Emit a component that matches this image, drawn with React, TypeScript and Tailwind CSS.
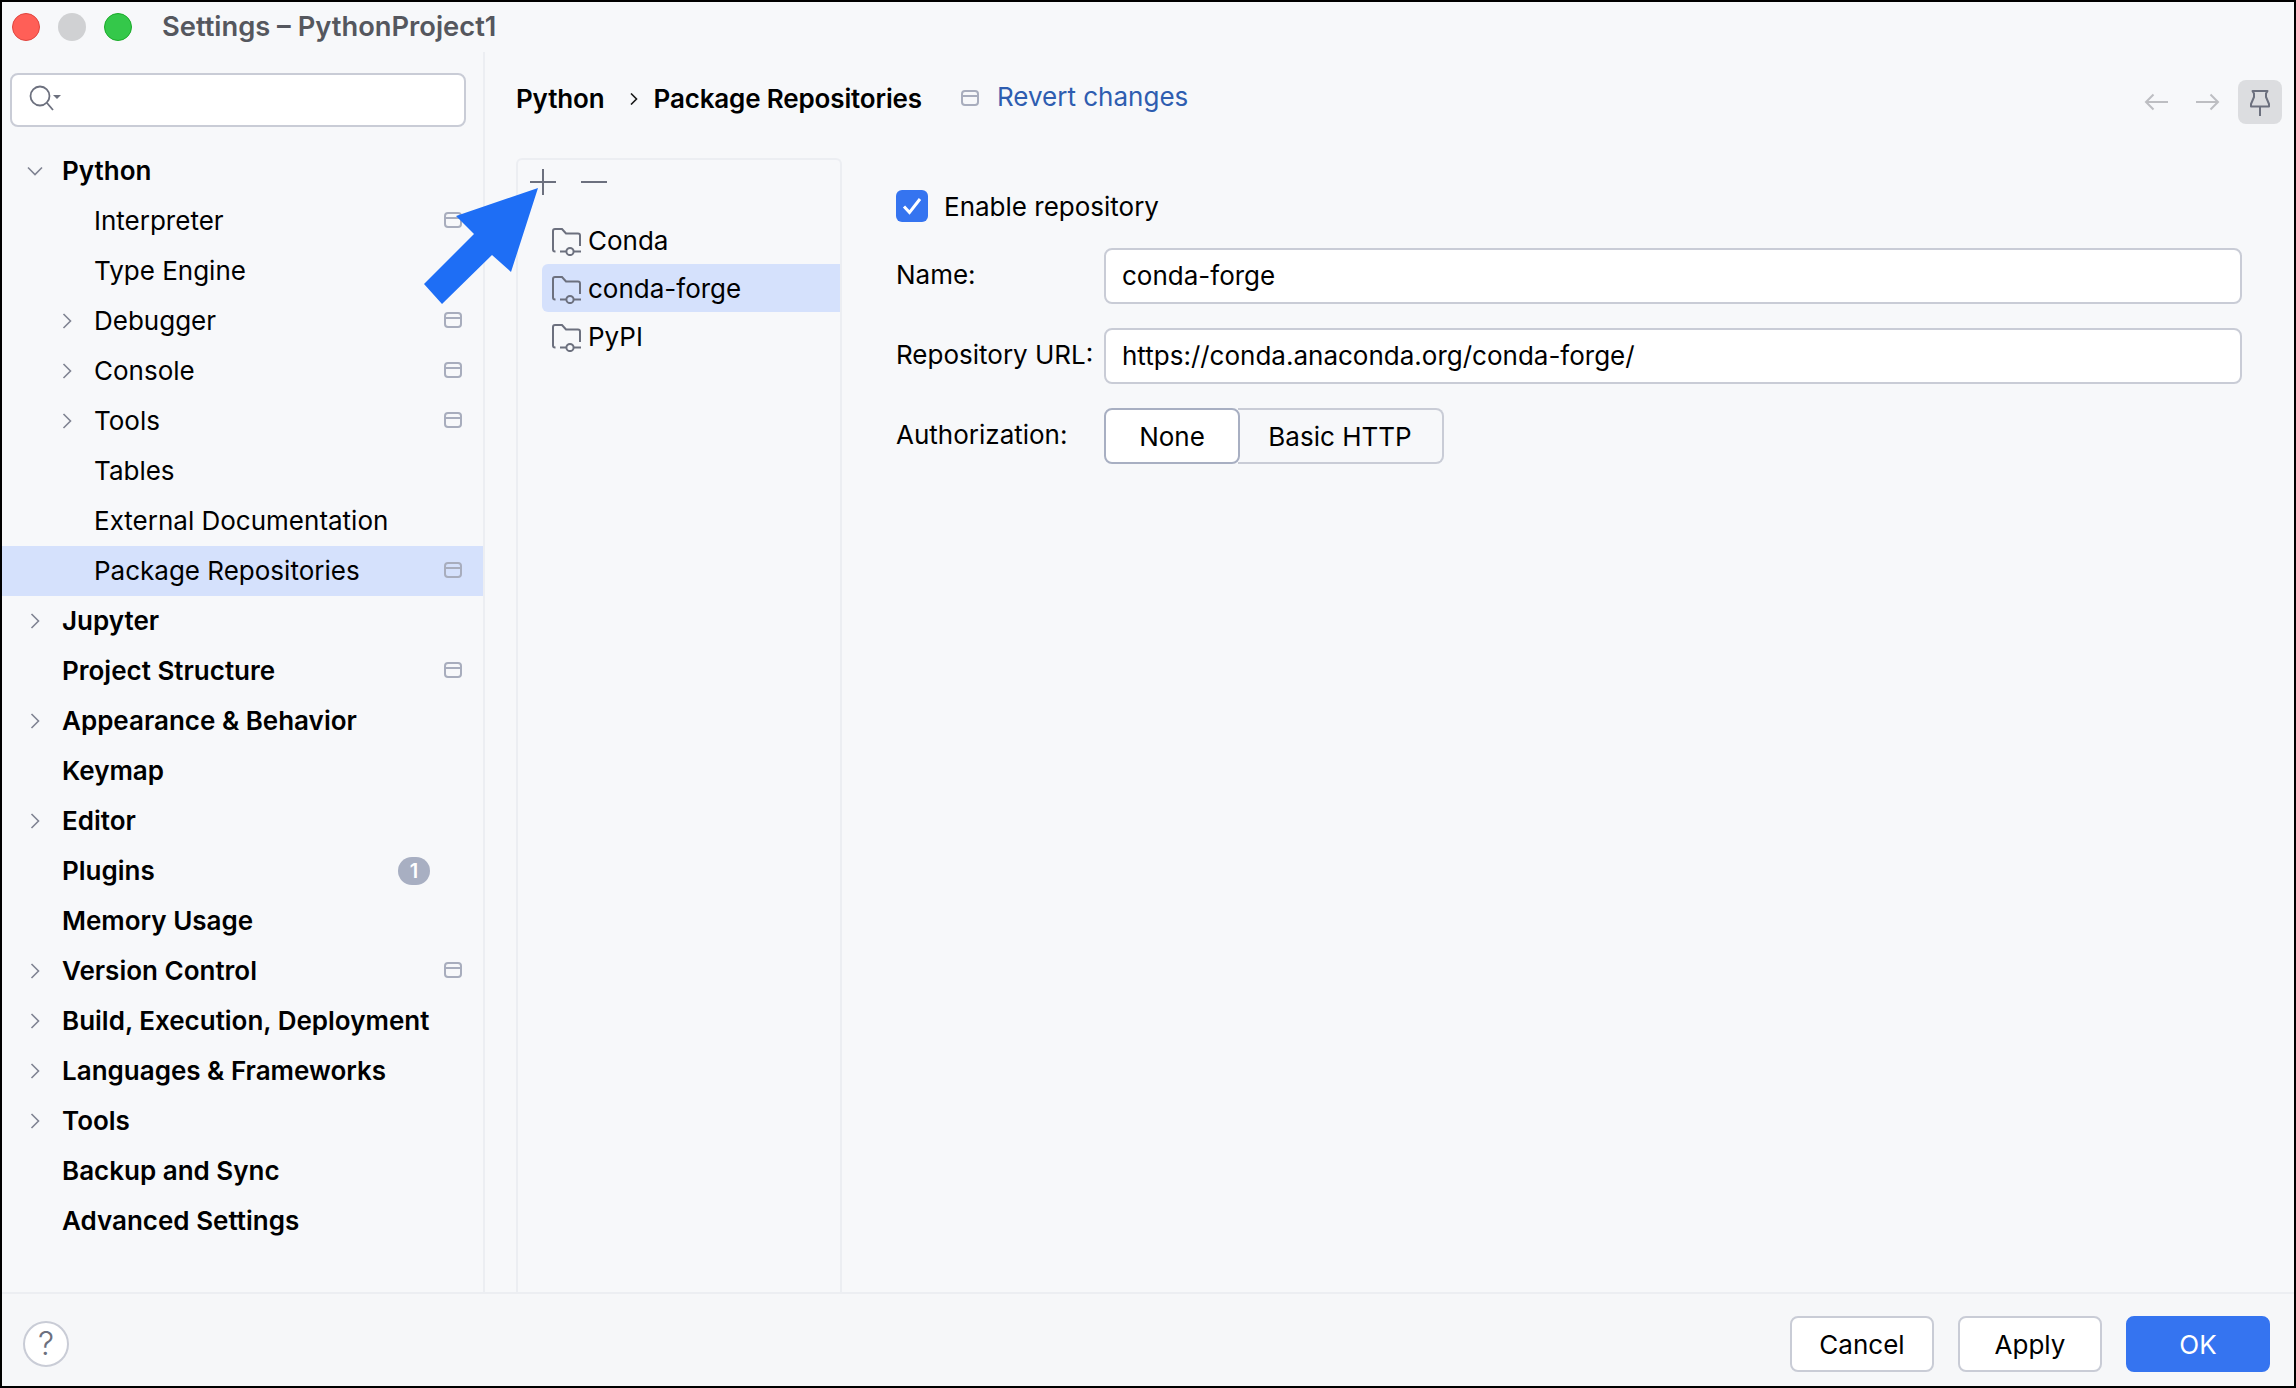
import { Fragment } from "react";

type Row = { label: string; level?: 0 | 1; caret?: "right" | "down"; mod?: boolean; badge?: string; selected?: boolean };

const rows: Row[] = [
  { label: "Python", caret: "down" },
  { label: "Interpreter", level: 1, mod: true },
  { label: "Type Engine", level: 1 },
  { label: "Debugger", level: 1, caret: "right", mod: true },
  { label: "Console", level: 1, caret: "right", mod: true },
  { label: "Tools", level: 1, caret: "right", mod: true },
  { label: "Tables", level: 1 },
  { label: "External Documentation", level: 1 },
  { label: "Package Repositories", level: 1, mod: true, selected: true },
  { label: "Jupyter", caret: "right" },
  { label: "Project Structure", mod: true },
  { label: "Appearance & Behavior", caret: "right" },
  { label: "Keymap" },
  { label: "Editor", caret: "right" },
  { label: "Plugins", badge: "1" },
  { label: "Memory Usage" },
  { label: "Version Control", caret: "right", mod: true },
  { label: "Build, Execution, Deployment", caret: "right" },
  { label: "Languages & Frameworks", caret: "right" },
  { label: "Tools", caret: "right" },
  { label: "Backup and Sync" },
  { label: "Advanced Settings" },
];

function ModIcon({ className = "" }: { className?: string }) {
  return (
    <svg width="18" height="16" viewBox="0 0 18 16" fill="none" className={className}>
      <rect x="1" y="1" width="16" height="14" rx="3" stroke="#a8adbd" strokeWidth="2" />
      <path d="M1 6h16" stroke="#a8adbd" strokeWidth="2" />
    </svg>
  );
}

function Caret({ dir }: { dir: "right" | "down" }) {
  if (dir === "down") {
    return (
      <svg width="16" height="10" viewBox="0 0 16 10" fill="none">
        <path d="M1 1.5l7 7 7-7" stroke="#7f8392" strokeWidth="1.6" />
      </svg>
    );
  }
  return (
    <svg width="10" height="16" viewBox="0 0 10 16" fill="none">
      <path d="M1.5 1l7 7-7 7" stroke="#7f8392" strokeWidth="1.6" />
    </svg>
  );
}

function RepoFolder() {
  return (
    <svg width="30" height="28" viewBox="0 0 30 28" fill="none" className="shrink-0 translate-y-[2px]">
      <path
        d="M3.5 23.5H3a2 2 0 0 1-2-2V3a2 2 0 0 1 2-2h7l4 4.5h12a2 2 0 0 1 2 2V18"
        stroke="#6c707e"
        strokeWidth="2"
      />
      <path d="M8 23.5h6.5M21.5 23.5H29" stroke="#6c707e" strokeWidth="2" />
      <circle cx="18" cy="23.5" r="3.6" stroke="#6c707e" strokeWidth="2" />
    </svg>
  );
}

function SidebarRow({ row }: { row: Row }) {
  const level = row.level ?? 0;
  return (
    <div
      className={`relative flex h-[50px] items-center ${row.selected ? "bg-[#d5e1fc]" : ""} ${
        level === 1 ? "pl-[92px] font-normal" : "pl-[60px] font-semibold"
      }`}
    >
      {row.caret && (
        <span className={`absolute flex w-4 justify-center ${level === 1 ? "left-[57px]" : "left-[25px]"}`}>
          <Caret dir={row.caret} />
        </span>
      )}
      <span className="text-[26px] leading-none text-black">{row.label}</span>
      {row.mod && <ModIcon className="absolute left-[442px] -translate-y-[1px]" />}
      {row.badge && (
        <span className="absolute left-[396px] flex h-7 w-8 items-center justify-center rounded-full bg-[#a8afc2] text-[20px] font-semibold text-white">
          {row.badge}
        </span>
      )}
    </div>
  );
}

function Field({ value }: { value: string }) {
  return (
    <div className="flex h-[56px] items-center rounded-lg border-2 border-[#c9ccd6] bg-white pb-[2px] pl-4 text-[26px] text-black">
      {value}
    </div>
  );
}

function FooterButton({ label, primary }: { label: string; primary?: boolean }) {
  return (
    <button
      type="button"
      className={`h-[56px] w-[144px] rounded-lg border-2 text-[26px] ${
        primary ? "border-[#3574f0] bg-[#3574f0] text-white" : "border-[#c9ccd6] bg-white text-black"
      }`}
    >
      {label}
    </button>
  );
}

export default function App() {
  return (
    <div className="relative flex h-[1388px] w-[2296px] flex-col overflow-hidden border-2 border-black bg-[#f7f8fa] [font-family:Inter,sans-serif]">
      <div className="flex h-[50px] shrink-0 items-center">
        <div className="ml-[10px] flex gap-[18px]">
          <span className="h-7 w-7 rounded-full border border-[#e0443e] bg-[#ff5f57]" />
          <span className="h-7 w-7 rounded-full bg-[#d0d1d3]" />
          <span className="h-7 w-7 rounded-full border border-[#1aab29] bg-[#34c84a]" />
        </div>
        <span className="ml-[30px] text-[27.3px] font-semibold text-[#55575e]">Settings – PythonProject1</span>
      </div>

      <div className="flex min-h-0 flex-1">
        <aside className="w-[483px] shrink-0 border-r-2 border-[#eceef2]">
          <div className="pb-[19px] pl-[8px] pt-[21px]">
            <div className="flex h-[54px] w-[456px] items-center rounded-lg border-2 border-[#c9ccd6] bg-white pl-[17px]">
              <svg width="32" height="30" viewBox="0 0 32 30" fill="none">
                <circle cx="11" cy="11" r="9.5" stroke="#6c707e" strokeWidth="1.8" />
                <path d="M18 18l6 7" stroke="#6c707e" strokeWidth="1.8" />
                <path d="M24 10h8l-4 4z" fill="#6c707e" />
              </svg>
            </div>
          </div>
          <div>
            {rows.map((r, i) => (
              <Fragment key={i}>
                <SidebarRow row={r} />
              </Fragment>
            ))}
          </div>
        </aside>

        <main className="flex min-w-0 flex-1 flex-col">
          <div className="flex h-[106px] shrink-0 items-start pl-[31px] pr-[12px] pt-[27px]">
            <div className="flex h-[39px] items-center">
              <span className="text-[26px] font-semibold tracking-[-0.15px] text-black">Python</span>
              <svg width="8" height="12" viewBox="0 0 8 12" fill="none" className="ml-[25px]">
                <path d="M1 0.5l5.5 5.5-5.5 5.5" stroke="#1a1a1a" strokeWidth="1.6" />
              </svg>
              <span className="ml-[16px] text-[26px] font-semibold tracking-[-0.15px] text-black">Package Repositories</span>
              <ModIcon className="ml-[39px] -translate-y-[1px]" />
              <span className="ml-[18px] -translate-y-[2px] text-[26px] text-[#2e5db0]">Revert changes</span>
            </div>
            <div className="ml-auto mt-[1px] flex h-11 items-center">
              <svg width="24" height="18" viewBox="0 0 24 18" fill="none">
                <path d="M24 9H2M9.5 1.5L2 9l7.5 7.5" stroke="#bdbec2" strokeWidth="2" />
              </svg>
              <svg width="24" height="18" viewBox="0 0 24 18" fill="none" className="ml-[28px]">
                <path d="M0 9h22M14.5 1.5L22 9l-7.5 7.5" stroke="#bdbec2" strokeWidth="2" />
              </svg>
              <div className="ml-[18px] h-11 w-11 rounded-lg bg-[#dcdde0]">
                <svg width="44" height="44" viewBox="0 0 44 44" fill="none">
                  <path
                    d="M14.5 11h15l-1.5 2.5V17l3 7v2.5H13V24l3-7v-3.5z"
                    stroke="#6c707e"
                    strokeWidth="2"
                    strokeLinejoin="round"
                  />
                  <path d="M22 27v9" stroke="#6c707e" strokeWidth="2" />
                </svg>
              </div>
            </div>
          </div>

          <div className="flex min-h-0 flex-1 pl-[31px]">
            <div className="w-[326px] shrink-0 rounded-t-md border-x-2 border-t-2 border-[#eceef2]">
              <div className="flex h-[56px] items-start gap-[25px] pl-[12px] pt-[9px]">
                <svg width="26" height="26" viewBox="0 0 26 26" fill="none">
                  <path d="M13 0v26M0 13h26" stroke="#6c707e" strokeWidth="2" />
                </svg>
                <svg width="26" height="26" viewBox="0 0 26 26" fill="none">
                  <path d="M0 13h26" stroke="#6c707e" strokeWidth="2" />
                </svg>
              </div>
              <div className="pl-[24px]">
                {["Conda", "conda-forge", "PyPI"].map((name) => (
                  <div
                    key={name}
                    className={`flex h-[48px] items-center gap-[6px] rounded-l-md pl-[10px] text-[26px] text-black ${
                      name === "conda-forge" ? "bg-[#d5e1fc]" : ""
                    }`}
                  >
                    <RepoFolder />
                    {name}
                  </div>
                ))}
              </div>
            </div>

            <div className="min-w-0 flex-1 pl-[54px] pr-[52px] pt-[32px]">
              <div className="flex h-8 items-center gap-4 text-[26px] text-black">
                <span className="flex h-8 w-8 items-center justify-center rounded-md bg-[#3574f0]">
                  <svg width="20" height="18" viewBox="0 0 20 18" fill="none">
                    <path d="M2 9.5l5.5 6L18 2" stroke="white" strokeWidth="3" />
                  </svg>
                </span>
                Enable repository
              </div>
              <div className="mt-[26px] grid grid-cols-[208px_1fr] items-center gap-y-[24px] text-[26px] text-black">
                <span className="-translate-y-[2px]">Name:</span>
                <Field value="conda-forge" />
                <span className="-translate-y-[2px]">Repository URL:</span>
                <Field value="https://conda.anaconda.org/conda-forge/" />
                <span className="-translate-y-[2px]">Authorization:</span>
                <div className="flex">
                  <div className="flex h-[56px] w-[136px] items-center justify-center rounded-lg border-2 border-[#a8afc2] bg-white">
                    None
                  </div>
                  <div className="-ml-[2px] flex h-[56px] w-[206px] items-center justify-center rounded-r-lg border-2 border-l-0 border-[#c9ccd6]">
                    Basic HTTP
                  </div>
                </div>
              </div>
            </div>
          </div>
        </main>
      </div>

      <footer className="flex h-[94px] shrink-0 items-center border-t-2 border-[#eceef2] bg-[#f6f7f9] pl-[21px] pr-[24px] pt-[8px]">
        <div className="flex h-[46px] w-[46px] items-center justify-center rounded-full border-2 border-[#c9ccd6] bg-white text-[32px] font-light leading-none text-[#6c707e]">
          ?
        </div>
        <div className="ml-auto flex gap-[24px]">
          <FooterButton label="Cancel" />
          <FooterButton label="Apply" />
          <FooterButton label="OK" primary />
        </div>
      </footer>

      {/* annotation arrow on top of the dialog */}
      <svg width="130" height="124" viewBox="0 0 130 124" className="absolute left-[420px] top-[184px]">
        <path d="M116 2L34 30l18 18L2 98l18 20 50-49 19 17z" fill="#1e6ef5" />
      </svg>
    </div>
  );
}
